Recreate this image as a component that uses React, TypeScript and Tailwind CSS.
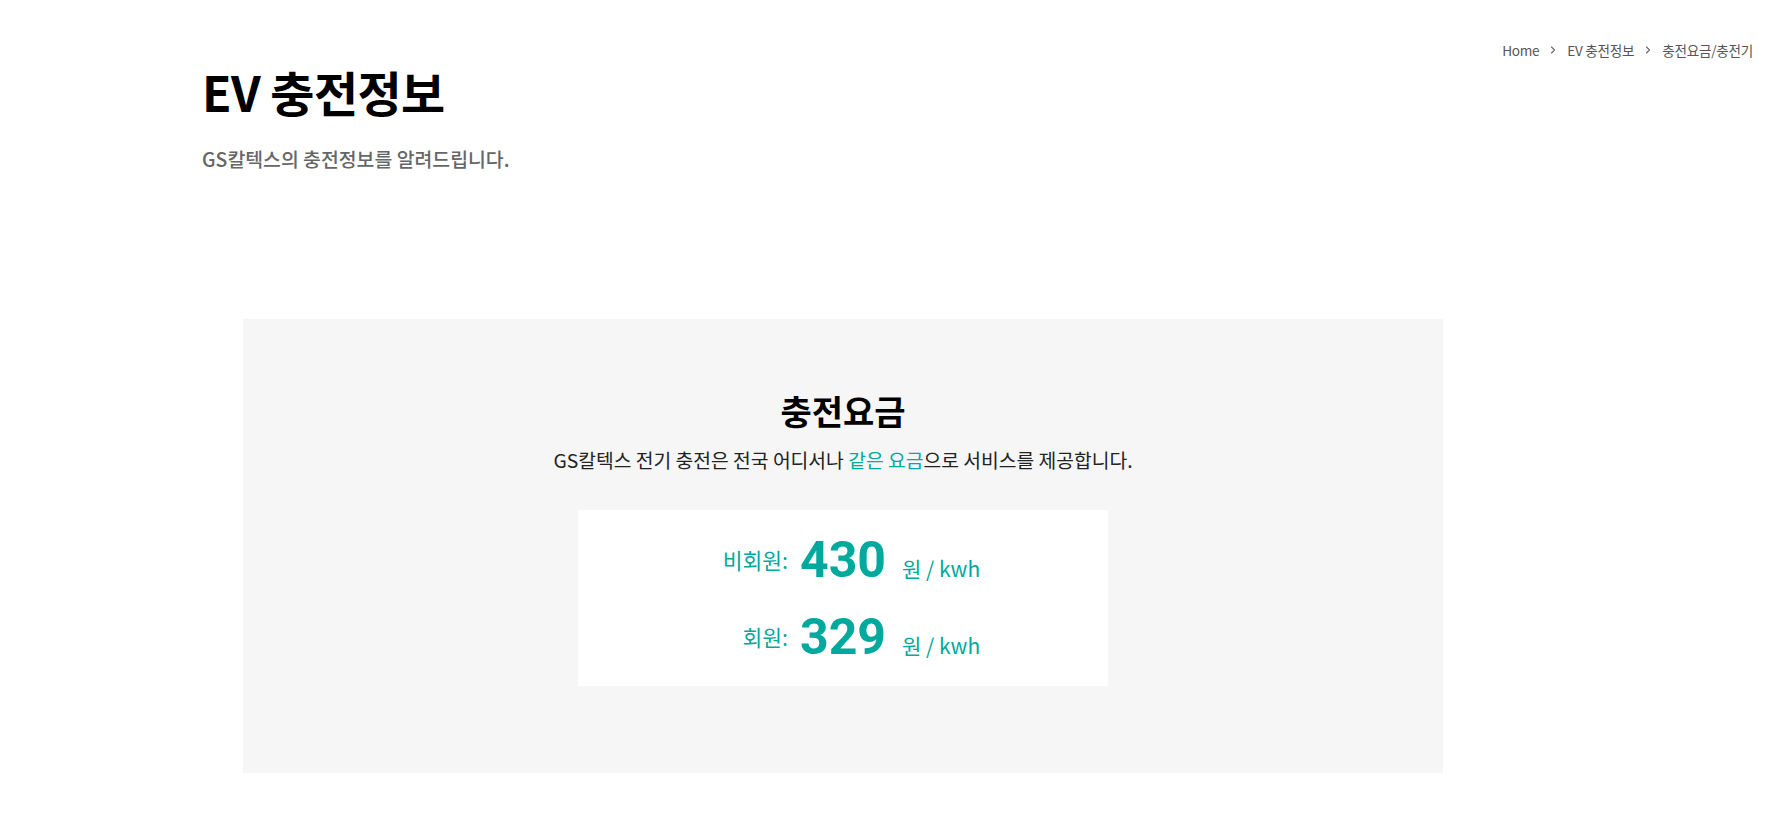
import { ChevronRight } from 'lucide-react';

const teal = 'text-[#00a99d]';

const Breadcrumb = () => {
    const items = ['Home', 'EV 충전정보', '충전요금/충전기'];
    return (
        <nav className="flex items-center justify-end pr-[19px] pt-[40px] text-[13.6px] leading-[20px] text-[#555] tracking-[-0.02em]">
            {items.map((item, idx) => (
                <span key={item} className="flex items-center">
                    {idx > 0 && <ChevronRight className="mx-[8px] w-[12px] h-[12px] text-[#666]" strokeWidth={2.2} />}
                    <span>{item}</span>
                </span>
            ))}
        </nav>
    );
};

const PriceRow = ({ label, price }: { label: string; price: string }) => (
    <div className="flex items-center h-[77px]">
        <div className={`w-[210px] text-right text-[21.5px] leading-[28px] ${teal}`}>{label}</div>
        <div className="flex items-baseline ml-[12px]">
            <span className={`font-['Roboto',sans-serif] font-bold text-[50px] leading-[60px] ${teal}`}>{price}</span>
            <span className={`ml-[16px] text-[21px] ${teal}`}>원 / kwh</span>
        </div>
    </div>
);

export default function App() {
    return (
        <div className="min-h-screen bg-white font-['Noto_Sans_CJK_KR','Noto_Sans',sans-serif]">
            <Breadcrumb />

            {/* Page header */}
            <div className="pl-[202px] mt-[2px]">
                <h1 className="text-[48px] leading-[58px] font-bold text-black tracking-[-0.6px]">EV 충전정보</h1>
                <p className="mt-[26px] text-[19.4px] leading-[26px] font-medium text-[#666]">
                    GS칼텍스의 충전정보를 알려드립니다.
                </p>
            </div>

            {/* Charging fee */}
            <section className="ml-[243px] mt-[147px] w-[1200px] bg-[#f6f6f6] pt-[70px] pb-[87px] flex flex-col items-center">
                <h2 className="text-[34px] leading-[44px] font-bold text-black">충전요금</h2>
                <p className="mt-[14px] text-[19.3px] leading-[26px] text-[#222]">
                    GS칼텍스 전기 충전은 전국 어디서나 <span className={teal}>같은 요금</span>으로 서비스를 제공합니다.
                </p>
                <div className="mt-[37px] w-[530px] bg-white py-[11px]">
                    <PriceRow label="비회원:" price="430" />
                    <PriceRow label="회원:" price="329" />
                </div>
            </section>
        </div>
    );
}
